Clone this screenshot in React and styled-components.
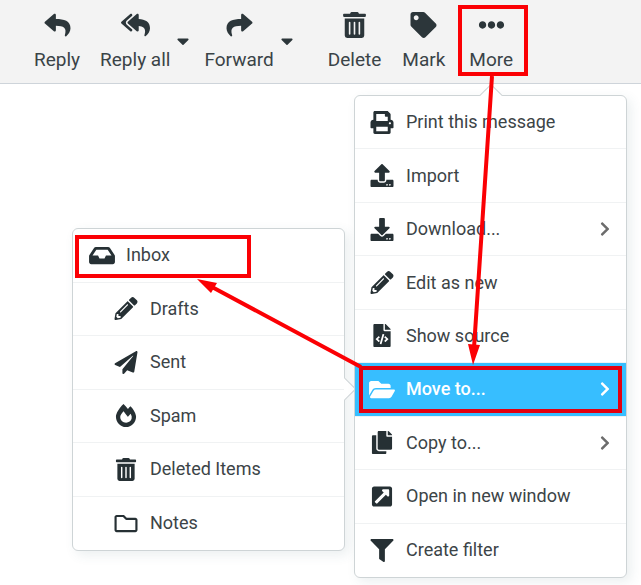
import React from "react";
import styled, { createGlobalStyle } from "styled-components";
import {
    FaReply,
    FaReplyAll,
    FaShare,
    FaCaretDown,
    FaTrashAlt,
    FaTag,
    FaEllipsisH,
    FaPrint,
    FaUpload,
    FaDownload,
    FaPencilAlt,
    FaFileCode,
    FaFolderOpen,
    FaCopy,
    FaExternalLinkSquareAlt,
    FaFilter,
    FaInbox,
    FaPaperPlane,
    FaFireAlt,
    FaRegFolder,
    FaChevronRight,
} from "react-icons/fa";

const GlobalStyle = createGlobalStyle`
    body {
        margin: 0;
        background: #fff;
        color: #2c363a;
        font-family: Roboto, "Liberation Sans", sans-serif;
        font-size: 18px;
    }
`;

const Page = styled.div`
    position: relative;
    overflow: hidden;
`;

const Toolbar = styled.header`
    display: flex;
    align-items: flex-start;
    padding: 12px 34px;
    height: 59px;
    background: #f3f3f3;
    border-bottom: 1px solid #ced4da;
`;

const ToolButton = styled.button`
    display: flex;
    flex-direction: column;
    align-items: center;
    gap: 10px;
    margin: 0 0 0 ${(props) => props.$before || 0}px;
    padding: 0;
    border: 0;
    background: none;
    color: #3a4347;
    font: inherit;
    font-size: 19px;
    line-height: 24px;
    white-space: nowrap;
    cursor: pointer;
    svg {
        width: 29px;
        height: 26px;
        color: #2c363a;
    }
`;

const CaretButton = styled.button`
    display: flex;
    margin: 16px 0 0 7px;
    padding: 0;
    border: 0;
    background: none;
    color: #2c363a;
    cursor: pointer;
    svg {
        width: 12px;
        height: 26px;
    }
`;

const Menus = styled.main`
    display: flex;
    align-items: flex-start;
    gap: 9px;
    padding: 11px 14px 7px 72px;
`;

const Menu = styled.ul`
    position: relative;
    flex: 1;
    display: grid;
    grid-auto-rows: 1fr;
    box-sizing: border-box;
    min-width: 0;
    min-height: ${(props) => props.$minHeight}px;
    margin: ${(props) => props.$top || 0}px 0 0;
    padding: 0;
    border: 1px solid #ced4d6;
    border-radius: 6px;
    background: #fff;
    box-shadow: 4px 4px 12px rgba(60, 100, 110, 0.1);
    list-style: none;
`;

/* little tip that ties a menu to what opened it */
const Tip = styled.li`
    position: absolute;
    width: 15px;
    height: 15px;
    background: #fff;
    border: solid #ced4d6;
    ${(props) =>
        props.$side === "top"
            ? "top: -9px; left: 50%; margin-left: -8px; border-width: 1px 0 0 1px;"
            : "right: -9px; top: 50%; margin-top: -9px; border-width: 1px 1px 0 0;"}
    transform: rotate(45deg);
`;

const Row = styled.li`
    position: relative;
    display: flex;
    border-bottom: 1px solid #f0f2f3;
    &:last-child {
        border-bottom: 0;
    }
`;

const RowLink = styled.a`
    flex: 1;
    display: flex;
    align-items: center;
    padding: 0 16px 0 ${(props) => props.$inset}px;
    background: ${(props) => (props.$active ? "#37beff" : "transparent")};
    color: ${(props) => (props.$active ? "#fff" : "#3c4447")};
    font-weight: ${(props) => (props.$active ? 500 : 400)};
    text-decoration: none;
    white-space: nowrap;
`;

const RowIcon = styled.span`
    display: flex;
    justify-content: center;
    width: 30px;
    margin-right: 9px;
    color: ${(props) => (props.$active ? "#fff" : "#263034")};
    svg {
        width: 26px;
        height: 23px;
    }
`;

const RowLabel = styled.span`
    flex: 1;
    line-height: 24px;
`;

const RowArrow = styled(FaChevronRight)`
    width: 10px;
    height: 16px;
    color: ${(props) => (props.$active ? "#fff" : "#6c6c6c")};
`;

const Marks = styled.svg`
    position: absolute;
    top: 0;
    left: 0;
    pointer-events: none;
`;

const moreItems = [
    { label: "Print this message", icon: FaPrint },
    { label: "Import", icon: FaUpload },
    { label: "Download...", icon: FaDownload, more: true },
    { label: "Edit as new", icon: FaPencilAlt },
    { label: "Show source", icon: FaFileCode },
    { label: "Move to...", icon: FaFolderOpen, more: true, active: true },
    { label: "Copy to...", icon: FaCopy, more: true },
    { label: "Open in new window", icon: FaExternalLinkSquareAlt },
    { label: "Create filter", icon: FaFilter },
];

const folders = [
    { label: "Inbox", icon: FaInbox, inset: 14 },
    { label: "Drafts", icon: FaPencilAlt, inset: 38 },
    { label: "Sent", icon: FaPaperPlane, inset: 38 },
    { label: "Spam", icon: FaFireAlt, inset: 38 },
    { label: "Deleted Items", icon: FaTrashAlt, inset: 38 },
    { label: "Notes", icon: FaRegFolder, inset: 38 },
];

const MenuRow = ({ label, icon: Icon, more, active, inset = 12 }) => (
    <Row>
        <RowLink href="#" $active={active} $inset={inset}>
            <RowIcon $active={active}><Icon /></RowIcon>
            <RowLabel>{label}</RowLabel>
            {more && <RowArrow $active={active} />}
        </RowLink>
    </Row>
);

const App = () => {
    return (
        <Page>
            <GlobalStyle />
            <Toolbar>
                <ToolButton><FaReply />Reply</ToolButton>
                <ToolButton $before={20}><FaReplyAll />Reply all</ToolButton>
                <CaretButton aria-label="Reply all options"><FaCaretDown /></CaretButton>
                <ToolButton $before={15}><FaShare />Forward</ToolButton>
                <CaretButton aria-label="Forward options"><FaCaretDown /></CaretButton>
                <ToolButton $before={35}><FaTrashAlt />Delete</ToolButton>
                <ToolButton $before={21}><FaTag />Mark</ToolButton>
                <ToolButton $before={24}><FaEllipsisH />More</ToolButton>
            </Toolbar>
            <Menus>
                <Menu $minHeight={323} $top={133}>
                    <Tip $side="right" aria-hidden="true" />
                    {folders.map((item) => <MenuRow key={item.label} {...item} />)}
                </Menu>
                <Menu $minHeight={483}>
                    <Tip $side="top" aria-hidden="true" />
                    {moreItems.map((item) => <MenuRow key={item.label} {...item} />)}
                </Menu>
            </Menus>
            <Marks width="641" height="585" viewBox="0 0 641 585" fill="none" stroke="#fb0004" strokeWidth="4" aria-hidden="true">
                <rect x="460" y="7" width="66" height="67" />
                <rect x="77" y="237" width="172" height="39" />
                <rect x="361" y="368" width="259" height="43" stroke="#e3000f" />
                <path d="M492 76L474 348M361 367L212 287" />
                <path d="M473 365L468 344L480 345Z M197 279L217 283L211 293Z" fill="#fb0004" stroke="none" />
            </Marks>
        </Page>
    );
}

export default App;
